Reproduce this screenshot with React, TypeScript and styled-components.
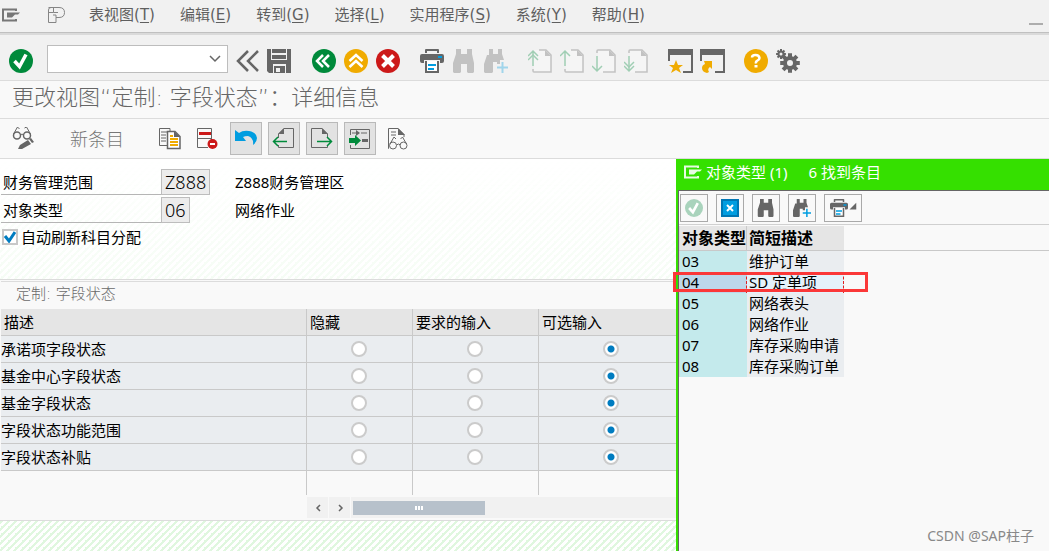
import React from 'react';
import styled, { createGlobalStyle, css } from 'styled-components';

const Global = createGlobalStyle`
  *, *::before, *::after { box-sizing: border-box; }
  html, body, #root { height: 100%; }
  body {
    margin: 0;
    overflow: hidden;
    background: #f9f9f9;
    color: #000;
    font: 15px/20px 'Noto Sans', 'Noto Sans CJK SC', sans-serif;
  }
  button, input { font: inherit; color: inherit; }
`;

const Page = styled.div`
  display: flex;
  flex-direction: column;
  height: 100%;
`;

const MenuBar = styled.nav`
  display: flex;
  align-items: center;
  flex: none;
  height: 35px;
  padding: 0 6px 4px 1px;
  background: #f1f1f1;
  border-bottom: 2px solid #dadada;
  box-shadow: inset 0 -1px 0 #c0c0c0;
  color: #5f5f5f;
`;

const MenuList = styled.ul`
  display: flex;
  flex: 1;
  gap: 25px;
  margin: 0 0 0 22px;
  padding: 0;
  list-style: none;
  font-family: 'DejaVu Sans', 'Noto Sans CJK SC', sans-serif;
`;

const MenuButton = styled.button`
  display: block;
  padding: 0;
  border: 0;
  background: none;
  white-space: nowrap;
  cursor: pointer;
  u { text-underline-offset: 2px; }
`;

const Minimize = styled.button`
  align-self: flex-end;
  width: 14px;
  height: 8px;
  margin-bottom: 4px;
  padding: 0;
  border: 0;
  border-bottom: 2px solid #adadad;
  background: none;
`;

const Toolbar = styled.div`
  display: flex;
  align-items: center;
  flex: none;
  height: 46px;
  padding: 6px 9px 0;
  background: #f1f1f1;
  border-bottom: 1px solid #dcdcdc;
`;

const Group = styled.div<{ $gap?: number; $left?: number }>`
  display: flex;
  align-items: center;
  gap: ${p => p.$gap ?? 8}px;
  margin-left: ${p => p.$left ?? 0}px;
`;

const IconButton = styled.button<{ $faded?: boolean }>`
  display: grid;
  place-items: center;
  flex: none;
  width: 24px;
  height: 24px;
  padding: 0;
  border: 0;
  background: none;
  cursor: pointer;
  opacity: ${p => (p.$faded ? 0.33 : 1)};
  svg { display: block; }
`;

const CommandField = styled.label`
  display: flex;
  align-items: center;
  width: 181px;
  height: 28px;
  margin: -4px 0 0 14px;
  padding-right: 6px;
  background: #fff;
  border: 1px solid #bdbdbd;
  input {
    flex: 1;
    min-width: 0;
    height: 24px;
    border: 0;
    outline: 0;
    background: none;
  }
`;

const TitleBar = styled.h1`
  flex: none;
  height: 38px;
  margin: 0;
  padding: 0 12px;
  border-bottom: 1px solid #dcdcdc;
  color: #666;
  font-family: 'DejaVu Sans', 'Noto Sans CJK SC', sans-serif;
  font-size: 22px;
  font-weight: 300;
  line-height: 34px;
`;

const AppBar = styled.div`
  display: flex;
  align-items: center;
  flex: none;
  height: 40px;
  padding: 0 12px;
  border-bottom: 1px solid #dcdcdc;
`;

const TextButton = styled.button`
  margin-left: 34px;
  padding: 0;
  border: 0;
  background: none;
  color: #777;
  font-size: 18px;
  font-weight: 300;
  line-height: 24px;
  white-space: nowrap;
`;

const ToggleButton = styled(IconButton)`
  width: 32px;
  height: 33px;
  border: 1px solid #b9b9b9;
  background: #e2e2e2;
`;

const Body = styled.main`
  display: flex;
  flex: 1;
  min-height: 0;
`;

const stripes = css`
  background: linear-gradient(135deg, #e0f7df 25%, #fff 25% 50%, #e0f7df 50% 75%, #fff 75%) 0 0 / 7px 7px;
`;

const Left = styled.section`
  display: flex;
  flex-direction: column;
  flex: 1;
  min-width: 0;
  overflow: hidden;
`;

const Form = styled.form`
  position: relative;
  height: 121px;
  flex: none;
  padding: 10px 1px 0;
  border-bottom: 1px solid #dcdcdc;
  background: #fff;
  isolation: isolate;
  &::before {
    content: '';
    position: absolute;
    inset: 0;
    z-index: -1;
    opacity: 0.3;
    ${stripes}
    mask-image: linear-gradient(transparent, #000);
  }
`;

const Field = styled.div`
  display: flex;
  height: 26px;
  margin-bottom: 2px;
  label {
    width: 160px;
    padding: 3px 2px 0;
    border-bottom: 1px solid #b5b5b5;
  }
`;

const FieldValue = styled.div<{ $wide?: boolean }>`
  width: 74px;
  input {
    display: block;
    width: ${p => (p.$wide ? 49 : 29)}px;
    height: 26px;
    padding: 0 3px;
    border: 1px solid #bdbdbd;
    background: #ececec;
    outline: 0;
    font-size: 18px;
    font-weight: 300;
  }
`;

const FieldText = styled.output`
  padding-top: 3px;
`;

const CheckLabel = styled.label`
  display: flex;
  align-items: center;
  gap: 3px;
  margin: 4px 0 0 1px;
`;

const CheckInput = styled.input`
  appearance: none;
  width: 16px;
  height: 16px;
  margin: 0;
  border: 2px solid #c8c8c8;
  background: #fff;
  &:checked {
    background: #fff url("data:image/svg+xml,%3Csvg xmlns='http://www.w3.org/2000/svg' viewBox='0 0 12 12'%3E%3Cpath d='M1 5 L5 10 L11 1' fill='none' stroke='%23007cc0' stroke-width='3'/%3E%3C/svg%3E") center / 12px 12px no-repeat;
  }
`;

const SectionTitle = styled.h2`
  flex: none;
  height: 28px;
  margin: 1px 0 0 1px;
  padding: 1px 15px 0;
  border-top: 1px solid #dcdcdc;
  color: #6a6a6a;
  font-family: 'DejaVu Sans', 'Noto Sans CJK SC', sans-serif;
  font-size: 15px;
  font-weight: 300;
  line-height: 22px;
`;

const StatusTable = styled.table`
  flex: none;
  width: 684px;
  margin-left: 1px;
  table-layout: fixed;
  border-collapse: separate;
  border-spacing: 0;
  th, td {
    height: 27px;
    padding: 0;
    border-right: 1px solid #c9c9c9;
    border-bottom: 1px solid #c9c9c9;
    background: #eaedf0;
    font-weight: 400;
    text-align: left;
    white-space: nowrap;
  }
  td { padding-right: 2px; }
  thead th {
    padding-left: 3px;
    background: #e5e5e5;
  }
  tfoot td {
    height: 24px;
    border-bottom: 0;
    background: none;
  }
`;

const Radio = styled.input`
  appearance: none;
  display: block;
  width: 16px;
  height: 16px;
  margin: 0 auto;
  border: 2px solid #cbcbcb;
  border-radius: 50%;
  background: #fff;
  &:checked { background: radial-gradient(circle, #007cc0 0 3px, #fff 4px); }
`;

const ScrollRow = styled.div`
  display: flex;
  align-items: center;
  flex: none;
  gap: 1px;
  height: 21px;
  margin: 2px 0 2px 307px;
`;

const ScrollArrow = styled.button`
  display: grid;
  place-items: center;
  width: 21px;
  height: 21px;
  padding: 0;
  border: 0;
  background: #f1f1f1;
`;

const ScrollTrack = styled.div`
  display: flex;
  align-items: center;
  flex: 1;
  height: 21px;
  padding-left: 2px;
  background: #f1f1f1;
`;

const ScrollThumb = styled.div`
  display: flex;
  align-items: center;
  justify-content: center;
  gap: 1px;
  width: 132px;
  height: 14px;
  background: #b7c1cb;
  i { width: 2px; height: 4px; background: #fff; }
`;

const StripeFooter = styled.footer`
  flex: 1;
  ${stripes}
  border-top: 1px solid #dcdcdc;
`;

const Dialog = styled.aside`
  display: flex;
  flex-direction: column;
  width: 373px;
  flex: none;
  border-left: 2px solid #35e000;
`;

const DialogTitle = styled.h2`
  display: flex;
  align-items: center;
  gap: 3px;
  height: 31px;
  flex: none;
  margin: 0;
  padding: 0 5px 6px;
  background: #35e000;
  color: #fff;
  font-size: 15px;
  font-weight: 400;
  white-space: pre;
  span + span { margin-left: 18px; }
`;

const DialogBody = styled.div`
  display: flex;
  flex-direction: column;
  flex: 1;
  border-top: 1px solid #666;
  border-left: 1px solid #666;
`;

const DialogTools = styled.div`
  display: flex;
  align-items: center;
  flex: none;
  gap: 8px;
  height: 34px;
  padding-left: 1px;
  border-bottom: 1px solid #d0d0d0;
`;

const DialogButton = styled(IconButton)<{ $wide?: boolean }>`
  width: ${p => (p.$wide ? 38 : 28)}px;
  height: 28px;
  border: 1px solid #a9a9a9;
  background: #f9f9f9;
`;

const ResultArea = styled.div`
  position: relative;
  display: flex;
  flex: 1;
  flex-direction: column;
  justify-content: space-between;
  align-items: flex-start;
  padding: 1px 0 4px;
`;

const HeaderRule = styled.div`
  position: absolute;
  top: 25px;
  left: 0;
  right: 0;
  height: 1px;
  background: #c9c9c9;
`;

const ResultTable = styled.table`
  width: 165px;
  table-layout: fixed;
  border-spacing: 0;
  border-left: 1px solid #d6d6d6;
  th {
    height: 25px;
    padding: 0 0 0 2px;
    background: #e5e5e5;
    border-bottom: 1px solid #c9c9c9;
    font-size: 16px;
    font-weight: 700;
    text-align: left;
    white-space: nowrap;
  }
  th:first-child { border-right: 1px solid #c9c9c9; }
  td {
    height: 21px;
    padding: 0 0 0 2px;
    background: #eaedf0;
    line-height: 19px;
    white-space: nowrap;
  }
  td:first-child { background: #c4eaec; }
`;

const ResultRow = styled.tr<{ $selected: boolean }>`
  ${p => p.$selected && css`
    && td { background: #e5f2fb; border-right: 1px dashed #e02020; }
    && td:first-child { background: #bdd7ea; }
  `}
`;

const Highlight = styled.div`
  position: absolute;
  top: 47px;
  left: -6px;
  width: 195px;
  height: 20px;
  border: 3px solid #fb3838;
`;

const Watermark = styled.small`
  align-self: flex-end;
  margin-right: 15px;
  color: #888;
  font-size: 14px;
  line-height: 22px;
`;

type Kids = { children: React.ReactNode; w?: number; h?: number };
const Svg = ({ children, w = 24, h = 24 }: Kids) => (
  <svg width={w} height={h} viewBox={`0 0 ${w} ${h}`} fill="none" aria-hidden="true">{children}</svg>
);

const G = '#666';

const MenuIcon = ({ color = '#777' }: { color?: string }) => (
  <Svg w={20} h={14}>
    <path d="M15 3V1.500H2V12.500H15V11" stroke={color} strokeWidth="2" />
    <path d="M6 4.500h13l-2 2h-3l-3 3H6z" fill={color} />
  </Svg>
);
const SessionIcon = () => (
  <Svg w={20} h={18}>
    <path d="M1.500 1.500H12Q17.500 1.500 17.500 6.500T12 11.500H9V16.500H1.500V4Q1.500 1.500 4 1.500M6.500 1.500V6.500H11M1.500 6.500H6.500M9 11.500V9H6" stroke="#858585" />
  </Svg>
);
const OkIcon = () => (
  <Svg><circle cx="12" cy="12" r="12" fill="#008a3b" />
    <path d="M5.500 12l5 5.500L17 5.500" stroke="#fff" strokeWidth="3.500" /></Svg>
);
const BackChevrons = () => (
  <Svg><path d="M12 2L2 12l10 10M22 2L12 12l10 10" stroke={G} strokeWidth="2.500" /></Svg>
);
const SaveIcon = () => (
  <Svg><path d="M0 0h24v24H2l-2-2z" fill={G} /><path d="M4 0h16v11H4zM6 15h13v9H6z" fill="#f1f1f1" />
    <path d="M5 0h14v4H5zM5 6h14v4H5zM7 17h11v7H7z" fill={G} /><path d="M9 19h4v4H9z" fill="#f1f1f1" /></Svg>
);
const BackIcon = () => (
  <Svg><circle cx="12" cy="12" r="12" fill="#008a3b" />
    <path d="M11 6l-6 6 6 6M17 6l-6 6 6 6" stroke="#fff" strokeWidth="2.500" /></Svg>
);
const ExitIcon = () => (
  <Svg><circle cx="12" cy="12" r="12" fill="#f0ab00" />
    <path d="M5.500 12L12 6l6.500 6M5.500 18L12 12l6.500 6" stroke="#fff" strokeWidth="2.500" /></Svg>
);
const CancelIcon = () => (
  <Svg><circle cx="12" cy="12" r="12" fill="#cc1919" />
    <path d="M6.500 6.500l11 11M17.500 6.500l-11 11" stroke="#fff" strokeWidth="4" /></Svg>
);
const PrintShape = () => (
  <><path d="M5 4V1q0-1 1-1h12q1 0 1 1v3h-2V2H7v2z" fill={G} />
    <path d="M2 5h20q2 0 2 2v5q0 2-2 2h-2v-3H4v3H2q-2 0-2-2V7q0-2 2-2z" fill={G} />
    <path d="M18 7h4v2h-4z" fill="#009de0" /><path d="M6 12v11h12V12" fill="#fff" stroke={G} strokeWidth="2" />
    <path d="M8 15h8v2H8zM8 19h6v2H8z" fill="#009de0" /></>
);
const PrintIcon = () => <Svg><PrintShape /></Svg>;
const FindShape = () => (
  <path d="M4 0h5v5h6V0h5v5l2 9v9l-1 1h-5l-1-1v-8H9v8l-1 1H2l-1-1v-9L4 5z" fill={G} />
);
const FindIcon = () => <Svg><FindShape /></Svg>;
const FindNextShape = () => (
  <><path d="M5 0h4v5h5V0h4v5l2 6h-4v4h-3v-2H9v10l-1 1H1l-1-1v-8L3 6h2z" fill={G} />
    <path d="M18.500 13v11M13 18.500h11" stroke="#009de0" strokeWidth="2" /></>
);
const FindNextIcon = () => <Svg><FindNextShape /></Svg>;
const PageIcon = ({ down, double }: { down?: boolean; double?: boolean }) => (
  <Svg>
    <path d="M6 23.500h17V6l-5-5H6" fill="#fff" />
    <path d={down ? 'M5 4V2q0-1 1-1h12l5 5v17H11' : 'M11 1h7l5 5v17H6q-1 0-1-1v-2'} stroke={G} strokeWidth="1.500" />
    <path d="M17 1v6h6z" fill={G} />
    <path d={down ? 'M5 7v15M0 17l5 5 5-5' : 'M5 17V2M0 7l5-5 5 5'} stroke="#008a3b" strokeWidth="1.500" />
    {double && <path d={down ? 'M0 13l5 5 5-5' : 'M0 11l5-5 5 5'} stroke="#008a3b" strokeWidth="1.500" />}
  </Svg>
);
const SessionWindow = ({ shortcut }: { shortcut?: boolean }) => (
  <Svg w={25}>
    <path d="M0 0h25v24H15v-2h8V6H2v6H0z" fill={G} />
    {shortcut
      ? <path d="M4 12h8v8l-2-2q-3 2-1 5l-2 1q-5-1-5-5 0-3 3-4z" fill="#f0ab00" />
      : <path d="M8 11l2 5h5l-4 3 2 5-5-3-5 3 2-5-4-3h5z" fill="#f0ab00" />}
  </Svg>
);
const HelpIcon = () => (
  <Svg><circle cx="12" cy="12" r="12" fill="#f0ab00" />
    <path d="M8 8.500Q8 6 11.500 6T15.500 9Q15.500 10.500 13.500 11.500T12 14.500" stroke="#fff" strokeWidth="2.500" />
    <path d="M10.500 16h3v2.500h-3z" fill="#fff" /></Svg>
);
const Gear = ({ x, y, r, k }: { x: number; y: number; r: number; k: number }) => (
  <g transform={`translate(${x} ${y})`} stroke={G}>
    <circle r={r} strokeWidth={k} />
    {[0, 45, 90, 135].map(a => (
      <path key={a} transform={`rotate(${a})`} d={`M0 ${-r - k * 1.2}V${-r}M0 ${r}V${r + k * 1.2}`} strokeWidth={k} />
    ))}
  </g>
);
const GearsIcon = () => <Svg><Gear x={14} y={14} r={5} k={4} /><Gear x={5} y={5} r={2.5} k={2} /></Svg>;

const EditIcon = () => (
  <Svg><circle cx="5" cy="8.500" r="3.500" stroke={G} strokeWidth="1.500" />
    <circle cx="15" cy="8.500" r="3.500" stroke={G} strokeWidth="1.500" />
    <path d="M8.500 8q1.500-2 3 0M1.500 7l4-7 2 2M18.500 7l-4-7-2 1" stroke={G} />
    <path d="M6 22l2-4 8-5 3 4-9 5zM17 12l2-1 3 4-2 1z" fill={G} /></Svg>
);
const CopyIcon = () => (
  <Svg><path d="M12 4V1.500H1.500V18.500H9M3 5h6M3 8h5M3 11h5M3 14h5" stroke={G} />
    <path d="M9.500 4.500H17l5 5v12H9.500z" fill="#fff" stroke={G} strokeWidth="1.500" />
    <path d="M16 4v6h6z" fill={G} /><path d="M12 9h3M12 12h8M12 15h8M12 18h8" stroke="#f0ab00" strokeWidth="2" /></Svg>
);
const DeleteIcon = () => (
  <Svg><path d="M12 20.500H1.500V1.500h14V13M1.500 11.500h14" stroke={G} />
    <path d="M3 5h12v3H3z" fill="#cc1919" /><circle cx="16.500" cy="17" r="5" fill="#cc1919" />
    <path d="M14 17h5" stroke="#fff" strokeWidth="2" /></Svg>
);
const UndoIcon = () => (
  <Svg><path d="M1 3l4 3q4-3 10-2 7 1 8 7 0 4-4 7 1-7-5-9-3 0-5 1l3 4H1z" fill="#009de0" /></Svg>
);
const PageArrow = ({ next }: { next?: boolean }) => (
  <Svg>
    <path d={next ? 'M17.500 10V7L12 1.500H1.500v19h16V18' : 'M6.500 11V7L12 1.500h9.500v19h-15V18'} stroke={G} />
    <path d={next ? 'M12 1v6h6z' : 'M12 1v6H6z'} fill={G} />
    <path d={next ? 'M7 14.500h14M17 10l4.500 4.500L17 19' : 'M15 14.500H2M6 10l-4.500 4.500L6 19'} stroke="#008a3b" strokeWidth="1.500" />
  </Svg>
);
const InsertIcon = () => (
  <Svg><path d="M2.500 8V2.500h19v19h-19V18M4 6h5M13 6h6" stroke={G} />
    <path d="M8 3l4 3-4 3z" fill={G} /><path d="M1 11h6V8l6 5.500-6 5.500v-3H1z" fill="#008a3b" />
    <path d="M14 12h6v3h-6z" fill={G} /></Svg>
);
const ReportIcon = () => (
  <Svg><path d="M3 21.500H2.500v-20H12l6 6V10M5 5h5M5 8h5" stroke={G} />
    <path d="M12 1v7h7z" fill={G} /><circle cx="7" cy="18.500" r="3.500" stroke={G} /><circle cx="17.500" cy="18.500" r="3.500" stroke={G} />
    <path d="M4 17l4-7 2 2M20.500 17l-4-7-2 2M10.500 18q2-2 4 0" stroke={G} /></Svg>
);
const CloseBox = () => (
  <Svg w={18} h={18}><path d="M1 1h16v16H1z" fill="#009de0" stroke="#0076b3" strokeWidth="2" />
    <path d="M6 6l6 6M12 6l-6 6" stroke="#fff" strokeWidth="2" /></Svg>
);
const Small = ({ children }: { children: React.ReactNode }) => (
  <svg width="18" height="18" viewBox="0 0 24 24" fill="none" aria-hidden="true">{children}</svg>
);
const Chevron = ({ d, w = 8 }: { d: string; w?: number }) => (
  <Svg w={w} h={8}><path d={d} stroke={G} strokeWidth="1.500" /></Svg>
);

const menus = [['表视图', 'T'], ['编辑', 'E'], ['转到', 'G'], ['选择', 'L'], ['实用程序', 'S'], ['系统', 'Y'], ['帮助', 'H']];
const statuses = ['承诺项字段状态', '基金中心字段状态', '基金字段状态', '字段状态功能范围', '字段状态补贴'];
const columns = ['隐藏', '要求的输入', '可选输入'];
const results = [['03', '维护订单'], ['04', 'SD 定单项'], ['05', '网络表头'], ['06', '网络作业'], ['07', '库存采购申请'], ['08', '库存采购订单']];

export default function App() {
  return (
    <Page>
      <Global />
      <MenuBar>
        <MenuIcon />
        <Group $left={26}><SessionIcon /></Group>
        <MenuList>
          {menus.map(([name, key]) => (
            <li key={key}><MenuButton>{name}(<u>{key}</u>)</MenuButton></li>
          ))}
        </MenuList>
        <Minimize aria-label="最小化" />
      </MenuBar>

      <Toolbar>
        <IconButton aria-label="确认"><OkIcon /></IconButton>
        <CommandField>
          <input aria-label="命令" />
          <Chevron w={12} d="M1 1l5 5 5-5" />
        </CommandField>
        <Group $left={8} $gap={7}>
          <IconButton aria-label="收起"><BackChevrons /></IconButton>
          <IconButton aria-label="保存"><SaveIcon /></IconButton>
        </Group>
        <Group $left={21}>
          <IconButton aria-label="返回"><BackIcon /></IconButton>
          <IconButton aria-label="退出"><ExitIcon /></IconButton>
          <IconButton aria-label="取消"><CancelIcon /></IconButton>
        </Group>
        <Group $left={20}>
          <IconButton aria-label="打印"><PrintIcon /></IconButton>
          <IconButton aria-label="查找" $faded><FindIcon /></IconButton>
          <IconButton aria-label="查找下一个" $faded><FindNextIcon /></IconButton>
        </Group>
        <Group $left={20}>
          <IconButton aria-label="首页" $faded><PageIcon double /></IconButton>
          <IconButton aria-label="上一页" $faded><PageIcon /></IconButton>
          <IconButton aria-label="下一页" $faded><PageIcon down /></IconButton>
          <IconButton aria-label="末页" $faded><PageIcon down double /></IconButton>
        </Group>
        <Group $left={20}>
          <IconButton aria-label="新会话"><SessionWindow /></IconButton>
          <IconButton aria-label="快捷方式"><SessionWindow shortcut /></IconButton>
        </Group>
        <Group $left={20}>
          <IconButton aria-label="帮助"><HelpIcon /></IconButton>
          <IconButton aria-label="设置"><GearsIcon /></IconButton>
        </Group>
      </Toolbar>

      <TitleBar>更改视图“定制: 字段状态”：详细信息</TitleBar>

      <AppBar>
        <IconButton aria-label="显示/更改"><EditIcon /></IconButton>
        <TextButton>新条目</TextButton>
        <Group $left={34} $gap={14}>
          <IconButton aria-label="复制"><CopyIcon /></IconButton>
          <IconButton aria-label="删除"><DeleteIcon /></IconButton>
        </Group>
        <Group $left={10} $gap={6}>
          <ToggleButton aria-label="撤销"><UndoIcon /></ToggleButton>
          <ToggleButton aria-label="上一条目"><PageArrow /></ToggleButton>
          <ToggleButton aria-label="下一条目"><PageArrow next /></ToggleButton>
          <ToggleButton aria-label="其他条目"><InsertIcon /></ToggleButton>
        </Group>
        <Group $left={10}><IconButton aria-label="字段内容"><ReportIcon /></IconButton></Group>
      </AppBar>

      <Body>
        <Left>
          <Form>
            <Field>
              <label htmlFor="area">财务管理范围</label>
              <FieldValue $wide><input id="area" defaultValue="Z888" readOnly /></FieldValue>
              <FieldText htmlFor="area">Z888财务管理区</FieldText>
            </Field>
            <Field>
              <label htmlFor="objectType">对象类型</label>
              <FieldValue><input id="objectType" defaultValue="06" readOnly /></FieldValue>
              <FieldText htmlFor="objectType">网络作业</FieldText>
            </Field>
            <CheckLabel><CheckInput type="checkbox" defaultChecked />自动刷新科目分配</CheckLabel>
          </Form>

          <SectionTitle>定制: 字段状态</SectionTitle>
          <StatusTable>
            <colgroup><col width="306" /><col width="106" /><col width="126" /><col width="146" /></colgroup>
            <thead>
              <tr><th scope="col">描述</th>{columns.map(c => <th key={c} scope="col">{c}</th>)}</tr>
            </thead>
            <tbody>
              {statuses.map(s => (
                <tr key={s}>
                  <th scope="row">{s}</th>
                  {columns.map((c, i) => (
                    <td key={c}><Radio type="radio" name={s} aria-label={`${s} ${c}`} defaultChecked={i === 2} /></td>
                  ))}
                </tr>
              ))}
            </tbody>
            <tfoot><tr><td /><td /><td /><td /></tr></tfoot>
          </StatusTable>
          <ScrollRow>
            <ScrollArrow aria-label="向左滚动"><Chevron d="M6 1L3 4l3 3" /></ScrollArrow>
            <ScrollArrow aria-label="向右滚动"><Chevron d="M3 1l3 3-3 3" /></ScrollArrow>
            <ScrollTrack><ScrollThumb><i /><i /><i /></ScrollThumb></ScrollTrack>
          </ScrollRow>
          <StripeFooter />
        </Left>

        <Dialog>
          <DialogTitle><MenuIcon color="#e8fbe2" /><span>对象类型 (1)</span><span>6 找到条目</span></DialogTitle>
          <DialogBody>
            <DialogTools>
              <DialogButton aria-label="确认">
                <Small><circle cx="12" cy="12" r="12" fill="#a9d3bc" /><path d="M5.500 12l5 5.500L17 5.500" stroke="#fff" strokeWidth="3.500" /></Small>
              </DialogButton>
              <DialogButton aria-label="关闭"><CloseBox /></DialogButton>
              <DialogButton aria-label="查找"><Small><FindShape /></Small></DialogButton>
              <DialogButton aria-label="查找下一个"><Small><FindNextShape /></Small></DialogButton>
              <DialogButton aria-label="打印" $wide>
                <svg width="27" height="18" viewBox="0 0 36 24" fill="none" aria-hidden="true"><PrintShape /><path d="M35 5v9h-9z" fill={G} /></svg>
              </DialogButton>
            </DialogTools>
            <ResultArea>
              <HeaderRule />
              <ResultTable>
                <colgroup><col width="67" /><col width="97" /></colgroup>
                <thead><tr><th scope="col">对象类型</th><th scope="col">简短描述</th></tr></thead>
                <tbody>
                  {results.map(([id, name]) => (
                    <ResultRow key={id} $selected={id === '04'}><td>{id}</td><td>{name}</td></ResultRow>
                  ))}
                </tbody>
              </ResultTable>
              <Highlight />
              <Watermark>CSDN @SAP柱子</Watermark>
            </ResultArea>
          </DialogBody>
        </Dialog>
      </Body>
    </Page>
  );
}
